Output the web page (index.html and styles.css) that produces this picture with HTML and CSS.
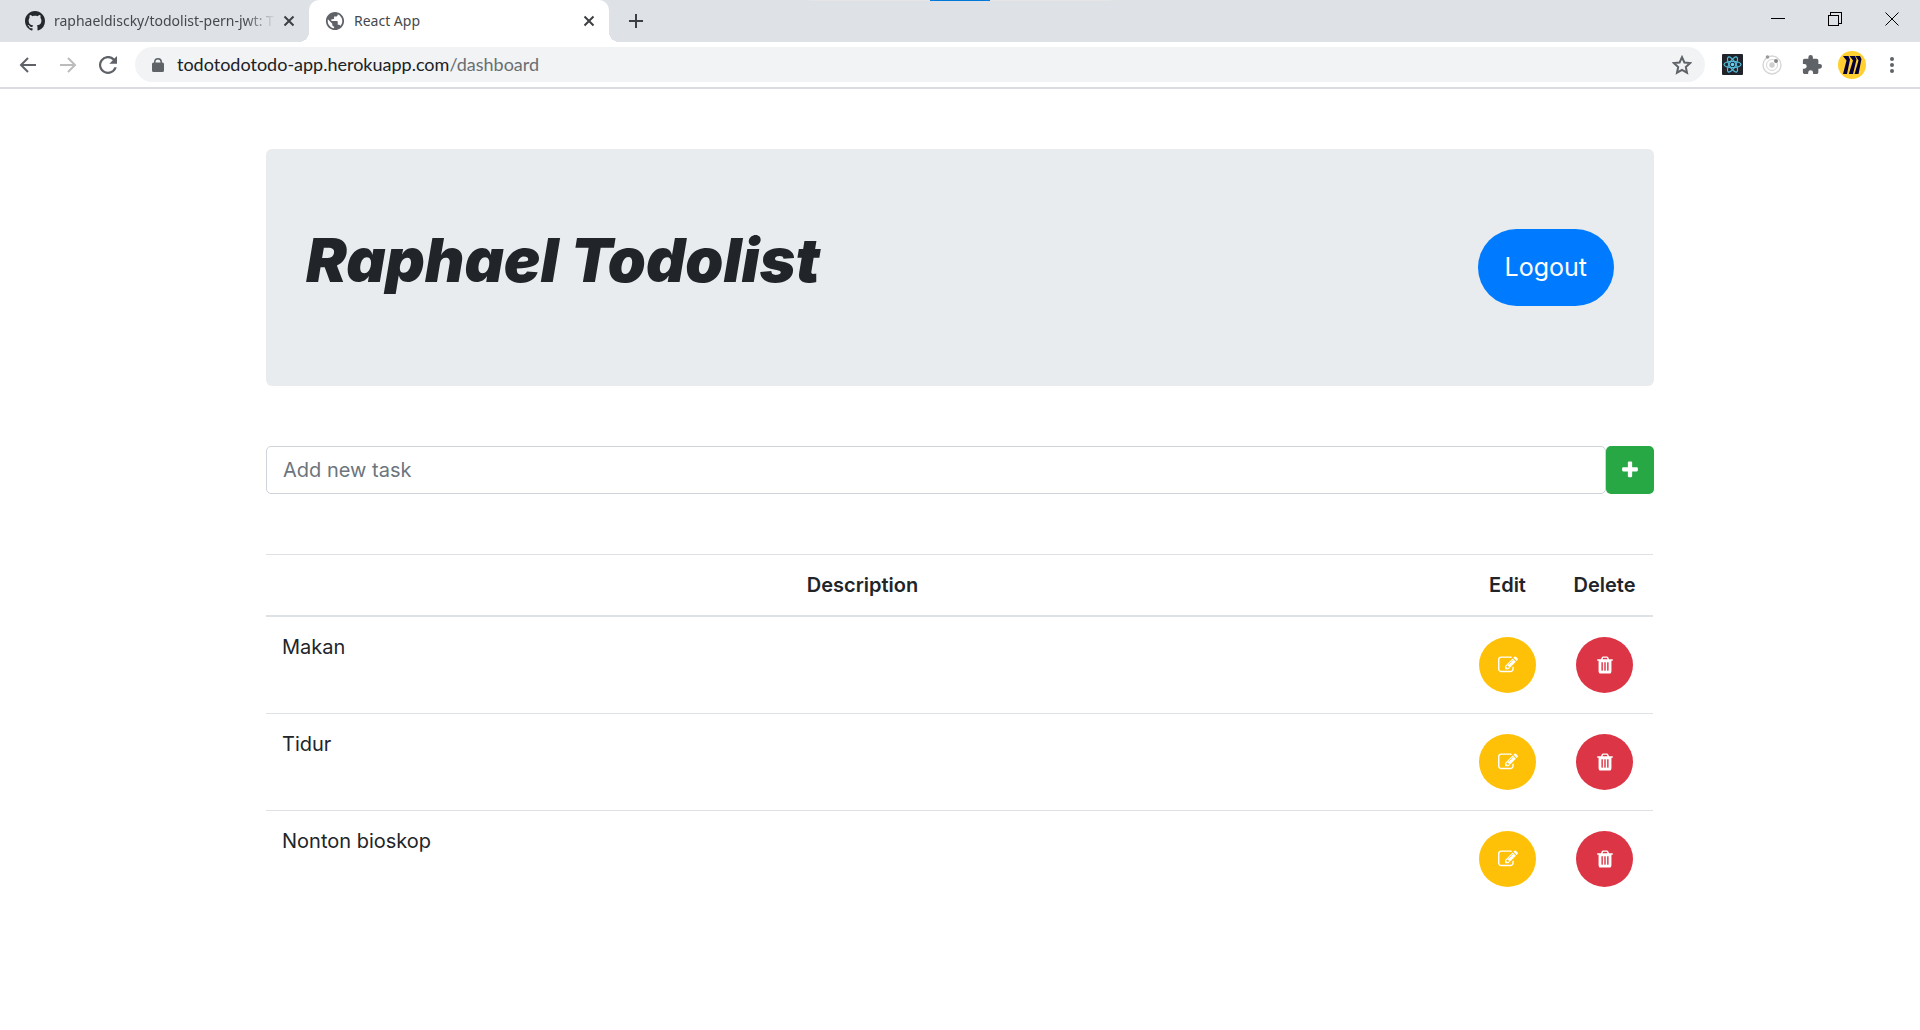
FILE: index.html
```html
<!DOCTYPE html>
<html lang="en">
<head>
<meta charset="utf-8">
<title>React App</title>
<link rel="stylesheet" href="styles.css">
</head>
<body>
<svg class="sprite" aria-hidden="true">
  <symbol id="i-close" viewBox="0 0 12 12"><path d="M1.500 1.500l9 9M10.500 1.500l-9 9" fill="none" stroke="currentColor" stroke-width="2"/></symbol>
  <symbol id="i-edit" viewBox="0 0 1792 1792"><path fill="currentColor" d="M888 1184l116-116-152-152-116 116v56h96v96h56zm440-720q-16-16-33 1l-350 350q-17 17-1 33t33-1l350-350q17-17 1-33zm80 594v190q0 119-84.500 203.500t-203.500 84.500h-832q-119 0-203.500-84.500t-84.500-203.500v-832q0-119 84.500-203.500t203.500-84.500h832q63 0 117 25 15 7 18 23 3 17-9 29l-49 49q-14 14-32 8-23-6-45-6h-832q-66 0-113 47t-47 113v832q0 66 47 113t113 47h832q66 0 113-47t47-113v-126q0-13 9-22l64-64q15-15 35-7t20 29zm-96-738l288 288-672 672h-288v-288zm444 132l-92 92-288-288 92-92q28-28 68-28t68 28l152 152q28 28 28 68t-28 68z"/></symbol>
  <symbol id="i-trash" viewBox="0 0 1792 1792"><path fill="currentColor" d="M704 1376v-704q0-14-9-23t-23-9h-64q-14 0-23 9t-9 23v704q0 14 9 23t23 9h64q14 0 23-9t9-23zm256 0v-704q0-14-9-23t-23-9h-64q-14 0-23 9t-9 23v704q0 14 9 23t23 9h64q14 0 23-9t9-23zm256 0v-704q0-14-9-23t-23-9h-64q-14 0-23 9t-9 23v704q0 14 9 23t23 9h64q14 0 23-9t9-23zm-544-992h448l-48-117q-7-9-17-11h-317q-10 2-17 11zm928 32v64q0 14-9 23t-23 9h-96v948q0 83-47 143.500t-113 60.500h-832q-66 0-113-58.500t-47-141.500v-952h-96q-14 0-23-9t-9-23v-64q0-14 9-23t23-9h309l70-167q15-37 54-63t79-26h320q40 0 79 26t54 63l70 167h309q14 0 23 9t9 23z"/></symbol>
</svg>

<header class="browser">
  <div class="tabstrip">
    <div class="drag-handle"></div>
    <div class="tab">
      <svg class="favicon" width="20" height="20" viewBox="0 0 16 16"><path fill="#24292e" d="M8 0C3.580 0 0 3.580 0 8c0 3.540 2.290 6.530 5.470 7.590.4.070.55-.17.55-.38 0-.19-.01-.82-.01-1.490-2.010.37-2.530-.49-2.690-.94-.09-.23-.48-.94-.82-1.130-.28-.15-.68-.52-.01-.53.63-.01 1.080.58 1.230.82.72 1.210 1.870.87 2.330.66.070-.52.28-.87.51-1.070-1.780-.2-3.640-.89-3.640-3.950 0-.87.31-1.590.82-2.150-.08-.2-.36-1.020.08-2.120 0 0 .67-.21 2.200.82.64-.18 1.320-.27 2-.27s1.360.09 2 .27c1.530-1.040 2.200-.82 2.200-.82.44 1.100.16 1.920.08 2.120.51.56.82 1.270.82 2.150 0 3.070-1.870 3.750-3.650 3.950.29.25.54.73.54 1.480 0 1.070-.01 1.930-.01 2.200 0 .21.15.46.55.38A8.010 8.010 0 0 0 16 8c0-4.420-3.580-8-8-8z"/></svg>
      <span class="tab-title tab-title-fade">raphaeldiscky/todolist-pern-jwt: T</span>
      <button class="tab-close" aria-label="Close tab"><svg width="12" height="12"><use href="#i-close"/></svg></button>
    </div>
    <div class="tab tab-active">
      <svg class="favicon" width="20" height="20" viewBox="1 1 22 22"><path fill="#5f6368" d="M12 2C6.480 2 2 6.480 2 12s4.480 10 10 10 10-4.480 10-10S17.520 2 12 2zm-1 17.930c-3.950-.49-7-3.850-7-7.930 0-.62.08-1.210.21-1.790L9 15v1c0 1.100.9 2 2 2v1.930zm6.900-2.540c-.26-.81-1-1.390-1.900-1.390h-1v-3c0-.55-.45-1-1-1H8v-2h2c.55 0 1-.45 1-1V7h2c1.100 0 2-.9 2-2v-.41c2.930 1.190 5 4.060 5 7.410 0 2.080-.8 3.970-2.100 5.390z"/></svg>
      <span class="tab-title">React App</span>
      <button class="tab-close" aria-label="Close tab"><svg width="12" height="12"><use href="#i-close"/></svg></button>
    </div>
    <button class="new-tab" aria-label="New tab"><svg width="16" height="16" viewBox="0 0 16 16"><path d="M8 1v14M1 8h14" stroke="#3c4043" stroke-width="2"/></svg></button>
    <div class="window-controls">
      <button aria-label="Minimize"><svg width="14" height="14" viewBox="0 0 14 14" shape-rendering="crispEdges"><path d="M0 6.500h14" stroke="#000"/></svg></button>
      <button aria-label="Restore"><svg width="14" height="14" viewBox="0 0 14 14" shape-rendering="crispEdges"><path d="M.5 3.500h10v10H.5zM2.500 3V.5h11v11H11" fill="none" stroke="#000"/></svg></button>
      <button aria-label="Close window"><svg width="14" height="14" viewBox="0 0 14 14"><path d="M.5.5l13 13M13.500.5l-13 13" stroke="#000"/></svg></button>
    </div>
  </div>

  <div class="toolbar">
    <button class="tool" aria-label="Back"><svg width="18" height="18" viewBox="0 0 18 18"><path d="M17 9H2M9 2L2 9l7 7" fill="none" stroke="#5f6368" stroke-width="2"/></svg></button>
    <button class="tool" aria-label="Forward"><svg width="18" height="18" viewBox="0 0 18 18"><path d="M1 9h15M9 2l7 7-7 7" fill="none" stroke="#babcbe" stroke-width="2"/></svg></button>
    <button class="tool" aria-label="Reload"><svg width="18" height="18" viewBox="3 3 18 18"><path fill="#5f6368" d="M18.400 5.600A9 9 0 1 0 20.700 14.300h-2.300a6.800 6.800 0 1 1-1.600-7.100L13.300 10.700H21V3z"/></svg></button>
    <div class="omnibox">
      <svg width="14" height="16" viewBox="0 0 14 16"><path fill="#5f6368" d="M3 5.500V5a4 4 0 0 1 8 0v.5h.5A1.500 1.500 0 0 1 13 7v6.500a1.500 1.500 0 0 1-1.500 1.500h-9A1.500 1.500 0 0 1 1 13.500V7a1.500 1.500 0 0 1 1.500-1.500zm1.500 0h5V5a2.500 2.500 0 0 0-5 0z"/></svg>
      <span class="url">todotodotodo-app.herokuapp.com<span class="url-path">/dashboard</span></span>
      <button class="star" aria-label="Bookmark this tab"><svg width="20" height="20" viewBox="2 2 20 20"><path d="M12 4.200l2.400 5.300 5.700.6-4.300 3.900 1.200 5.700-5-2.900-5 2.900 1.200-5.700-4.300-3.900 5.700-.6z" fill="none" stroke="#5f6368" stroke-width="2"/></svg></button>
    </div>
    <div class="extensions">
      <button class="tool" aria-label="React Developer Tools"><svg width="21" height="21" viewBox="0 0 21 21"><rect width="21" height="21" rx="1" fill="#20232a"/><g fill="none" stroke="#53b9d9" stroke-width="1.200"><ellipse cx="10.500" cy="10.500" rx="8.500" ry="3.200"/><ellipse cx="10.500" cy="10.500" rx="8.500" ry="3.200" transform="rotate(60 10.500 10.500)"/><ellipse cx="10.500" cy="10.500" rx="8.500" ry="3.200" transform="rotate(120 10.500 10.500)"/></g><circle cx="10.500" cy="10.500" r="1.700" fill="#61dafb"/></svg></button>
      <button class="tool" aria-label="Orbit extension"><svg width="22" height="22" viewBox="0 0 22 22"><g fill="none" stroke="#d6d6d6"><circle cx="11" cy="11" r="9" stroke-width="1.400"/><circle cx="11" cy="11" r="5.500"/></g><circle cx="11" cy="11" r="2.700" fill="#cfcfcf"/><circle cx="6.500" cy="3" r="1.800" fill="#999"/><circle cx="15" cy="7" r="2" fill="#858585"/></svg></button>
      <button class="tool" aria-label="Extensions"><svg width="20" height="20" viewBox="1 1 22 22"><path fill="#5f6368" d="M20.500 11H19V7c0-1.100-.9-2-2-2h-4V3.500a2.500 2.500 0 0 0-5 0V5H4c-1.100 0-2 .9-2 2v3.800h1.500a2.700 2.700 0 0 1 0 5.400H2V20c0 1.100.9 2 2 2h3.800v-1.500a2.700 2.700 0 0 1 5.400 0V22H17c1.100 0 2-.9 2-2v-4h1.500a2.500 2.500 0 0 0 0-5z"/></svg></button>
      <button class="tool" aria-label="Profile"><svg width="28" height="28" viewBox="0 0 28 28"><circle cx="14" cy="14" r="14" fill="#ffd02f"/><path fill="#050038" d="M5 5h5.500l1.500 3.500L9 23H5L8.500 9.500zM11.500 5H17l1.500 3.500L15 23h-4.200L15 9.500zM17.500 5H22l1.500 3L20.500 23h-4l4-13.500z"/></svg></button>
      <button class="tool" aria-label="Menu"><svg width="18" height="18" viewBox="0 0 18 18" fill="#5f6368"><circle cx="9" cy="3" r="2"/><circle cx="9" cy="9" r="2"/><circle cx="9" cy="15" r="2"/></svg></button>
    </div>
  </div>
</header>

<main class="container">
  <section class="jumbotron">
    <h1>Raphael Todolist</h1>
    <button class="logout">Logout</button>
  </section>

  <form class="add-form">
    <input type="text" placeholder="Add new task" aria-label="Add new task">
    <button type="button" aria-label="Add"><svg width="20" height="20" viewBox="0 0 1792 1792"><path fill="currentColor" d="M1600 736v192q0 40-28 68t-68 28h-416v416q0 40-28 68t-68 28h-192q-40 0-68-28t-28-68v-416h-416q-40 0-68-28t-28-68v-192q0-40 28-68t68-28h416v-416q0-40 28-68t68-28h192q40 0 68 28t28 68v416h416q40 0 68 28t28 68z"/></svg></button>
  </form>

  <table class="tasks">
    <thead>
      <tr><th>Description</th><th class="col-action">Edit</th><th class="col-action">Delete</th></tr>
    </thead>
    <tbody>
      <tr>
        <td>Makan</td>
        <td><button class="round edit" aria-label="Edit Makan"><svg width="20" height="20"><use href="#i-edit"/></svg></button></td>
        <td><button class="round delete" aria-label="Delete Makan"><svg width="20" height="20"><use href="#i-trash"/></svg></button></td>
      </tr>
      <tr>
        <td>Tidur</td>
        <td><button class="round edit" aria-label="Edit Tidur"><svg width="20" height="20"><use href="#i-edit"/></svg></button></td>
        <td><button class="round delete" aria-label="Delete Tidur"><svg width="20" height="20"><use href="#i-trash"/></svg></button></td>
      </tr>
      <tr>
        <td>Nonton bioskop</td>
        <td><button class="round edit" aria-label="Edit Nonton bioskop"><svg width="20" height="20"><use href="#i-edit"/></svg></button></td>
        <td><button class="round delete" aria-label="Delete Nonton bioskop"><svg width="20" height="20"><use href="#i-trash"/></svg></button></td>
      </tr>
    </tbody>
  </table>
</main>
</body>
</html>
```
FILE: styles.css
```css
* { box-sizing: border-box; }

body {
  margin: 0;
  background: #fff;
  color: #212529;
  font: 400 20px/30px Inter, "Open Sans", sans-serif;
}

button {
  display: flex;
  align-items: center;
  justify-content: center;
  padding: 0;
  border: 0;
  background: none;
  color: inherit;
  font: inherit;
  cursor: pointer;
}

svg { display: block; flex: none; }
.sprite { display: none; }

/* Browser frame */
.browser {
  border-bottom: 2px solid #dadce0;
  font-family: "Noto Sans", "Open Sans", sans-serif;
}

.tabstrip {
  position: relative;
  display: flex;
  align-items: stretch;
  height: 42px;
  padding-left: 9px;
  background: #dee1e6;
}

.drag-handle {
  position: absolute;
  top: 0;
  left: 50%;
  width: 302px;
  height: 1px;
  transform: translateX(-50%);
  background: linear-gradient(#0078d7, #0078d7) center / 60px 1px no-repeat #e5e5e5;
}

.tab {
  position: relative;
  display: flex;
  align-items: center;
  width: 300px;
  padding: 0 9px 0 16px;
  color: #45494d;
  font-size: 14px;
  line-height: 20px;
}

.favicon { margin-right: 9px; }

.tab-title {
  flex: 1;
  min-width: 0;
  white-space: nowrap;
}

.tab-title-fade {
  mask-image: linear-gradient(to right, #000 190px, transparent 222px);
}

.tab-close { width: 22px; height: 22px; color: #3c4043; }

.tab-active {
  border-radius: 10px 10px 0 0;
  background: #fff;
}

.tab-active::before,
.tab-active::after {
  content: "";
  position: absolute;
  bottom: 0;
  width: 10px;
  height: 10px;
}

.tab-active::before {
  right: 100%;
  background: radial-gradient(circle at 0 0, transparent 10px, #fff 10px);
}

.tab-active::after {
  left: 100%;
  background: radial-gradient(circle at 100% 0, transparent 10px, #fff 10px);
}

.new-tab { width: 32px; margin-left: 11px; }

.window-controls { display: flex; margin-left: auto; height: 37px; }
.window-controls button { width: 57px; }

.toolbar {
  display: flex;
  align-items: center;
  height: 45px;
  padding: 0 8px;
}

.tool { width: 40px; height: 36px; }

.omnibox {
  flex: 1;
  display: flex;
  align-items: center;
  height: 35px;
  margin: 0 7px;
  padding: 0 13px 0 16px;
  border-radius: 18px;
  background: #f1f3f4;
  color: #202124;
  font: 18px/24px Lato, "Open Sans", sans-serif;
}

.url { flex: 1; margin-left: 12px; padding-bottom: 2px; }
.url-path { color: #6a6e72; }

.extensions { display: flex; }

/* Page */
.container {
  max-width: 1428px;
  margin: 0 auto;
  padding: 60px 20px;
}

.jumbotron {
  display: flex;
  align-items: flex-start;
  justify-content: space-between;
  padding: 80px 40px;
  border-radius: 6px;
  background: #e9ecef;
}

h1 {
  margin: 0;
  font-size: 61px;
  font-style: italic;
  font-weight: 900;
  line-height: 62px;
}

.logout {
  padding: 20px 27px;
  border-radius: 40px;
  background: #007bff;
  color: #fff;
  font-size: 25px;
  line-height: 37px;
}

.add-form { display: flex; margin: 60px 0; }

.add-form input {
  flex: 1;
  min-width: 0;
  height: 48px;
  padding: 0 16px;
  border: 1px solid #ced4da;
  border-radius: 5px;
  background: #fff;
  color: #495057;
  font: inherit;
}

.add-form input::placeholder { color: #6c757d; opacity: 1; }

.add-form button {
  width: 48px;
  height: 48px;
  border-radius: 5px;
  background: #28a745;
  color: #fff;
}

.tasks {
  width: calc(100% - 1px);
  border-collapse: separate;
  border-spacing: 0;
}

.tasks th {
  padding: 15px;
  border-top: 1px solid #dee2e6;
  border-bottom: 2px solid #dee2e6;
  font-weight: 600;
  text-align: center;
}

.tasks .col-action { width: 97px; }

.tasks td {
  padding: 15px 16px;
  border-top: 1px solid #dee2e6;
  vertical-align: top;
}

.tasks tbody tr:first-child td { border-top: 0; }

.tasks td + td { padding: 20px; }

.round {
  width: 57px;
  height: 56px;
  border-radius: 50%;
  color: #fff;
}

.edit { background: #ffc107; }
.delete { background: #dc3545; }
```
